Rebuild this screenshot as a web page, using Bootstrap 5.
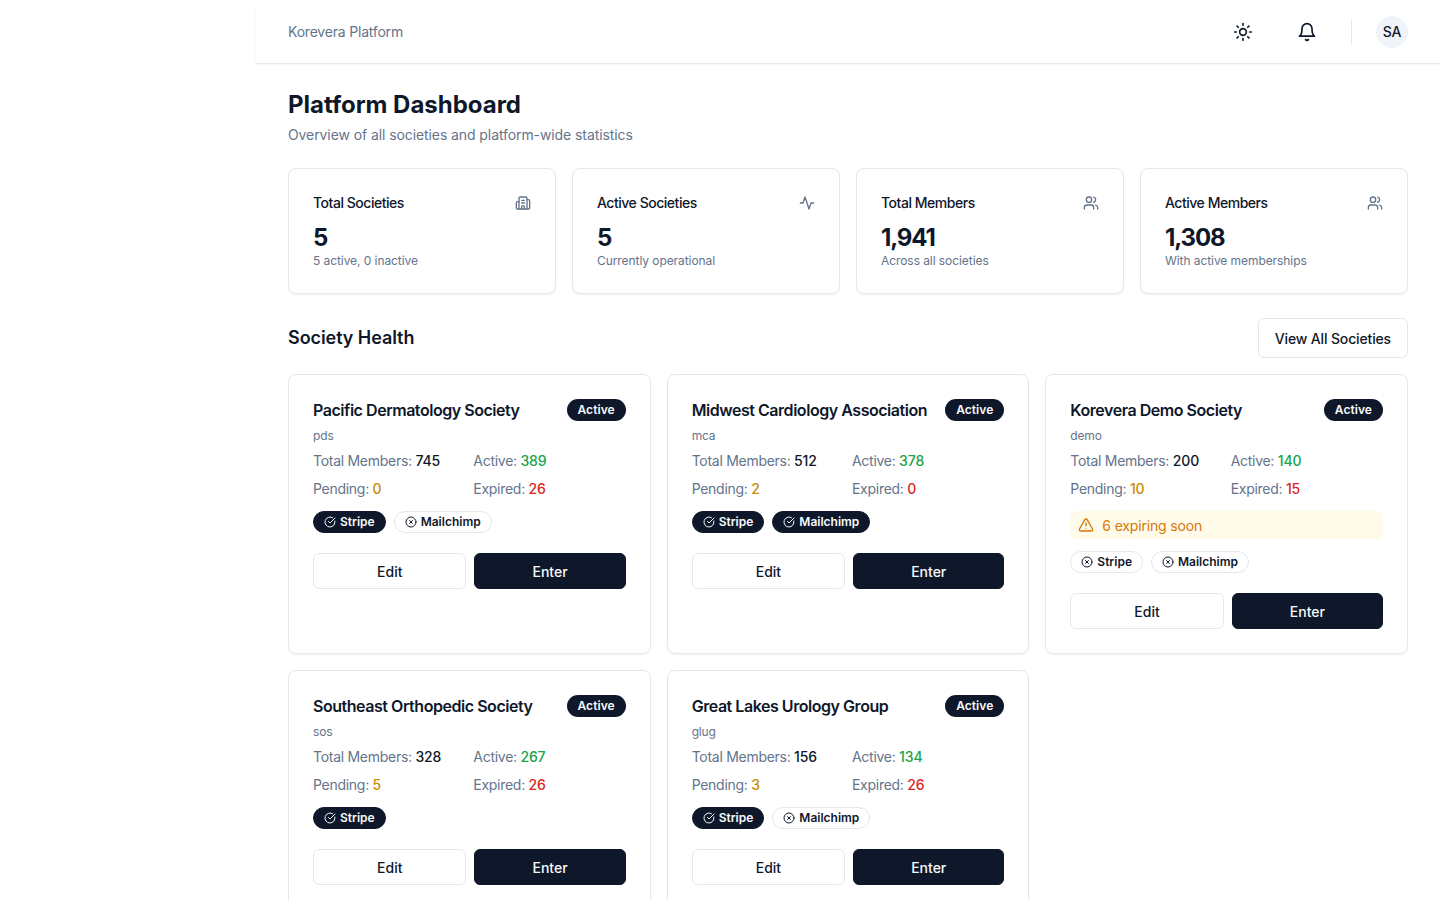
<!DOCTYPE html>
<html lang="en">
  <head>
    <meta charset="UTF-8" />
    <title>Platform Dashboard</title>
    <link href="https://cdn.jsdelivr.net/npm/bootstrap@5.3.2/dist/css/bootstrap.min.css" rel="stylesheet" />
    <style>
      html, body { height: 100%; overflow: hidden; }
      body { font-family: Inter, "Liberation Sans", sans-serif; color: #0f172a; background: #fff; letter-spacing: -0.01em; }
      svg { display: block; flex: none; fill: none; stroke: currentColor; stroke-width: 2; stroke-linecap: round; stroke-linejoin: round; }
      .app-main { margin-left: 256px; }
      .top-bar { height: 64px; padding: 0 32px; border-bottom: 1px solid #e2e8f0; box-shadow: 0 1px 2px rgba(15, 23, 42, .05); }
      .brand-txt { font-size: 14px; color: #64748b; letter-spacing: -0.2px; }
      .top-icon { width: 40px; height: 40px; color: #0f172a; }
      .top-sep { width: 1px; height: 24px; background: #e2e8f0; margin: 0 24px 0 24px; }
      .avatar-sa { width: 32px; height: 32px; border-radius: 50%; background: #f1f5f9; font-size: 14px; font-weight: 500; }
      .page-body { padding: 24px 32px; }
      .page-title { font-size: 24px; line-height: 33px; font-weight: 700; margin: 0 0 3px; letter-spacing: -0.02px; }
      .page-sub { font-size: 14px; line-height: 21px; color: #64748b; margin: 0 0 23px; letter-spacing: -0.09px; }
      .stat-grid { display: grid; grid-template-columns: repeat(4, 1fr); gap: 16px; margin-bottom: 24px; }
      .panel { border: 1px solid #e2e8f0; border-radius: 8px; box-shadow: 0 1px 2px rgba(15, 23, 42, .05); padding: 24px; background: #fff; }
      .stat-head { font-size: 14px; line-height: 20px; font-weight: 500; height: 20px; letter-spacing: -0.47px; }
      .stat-head svg { color: #64748b; }
      .stat-val { font-size: 24px; line-height: 31px; font-weight: 700; margin-top: 9px; letter-spacing: -1.1px; }
      .stat-note { font-size: 12px; line-height: 16px; color: #64748b; letter-spacing: -0.07px; }
      .sec-head { height: 40px; margin-bottom: 16px; }
      .sec-title { font-size: 18px; line-height: 28px; font-weight: 600; margin: 0; letter-spacing: -0.07px; }
      .btn-plain { height: 40px; padding: 0 16px; font-size: 14px; font-weight: 500; color: #0f172a; background: #fff; border: 1px solid #e2e8f0; border-radius: 6px; letter-spacing: -0.15px; }
      .soc-grid { display: grid; grid-template-columns: repeat(3, 1fr); gap: 16px; }
      .soc-title { font-size: 16px; line-height: 22px; font-weight: 600; margin: 0; letter-spacing: -0.46px; }
      .pill-active { font-size: 12px; line-height: 16px; font-weight: 600; padding: 3px 11px; border-radius: 999px; background: #0f172a; color: #f8fafc; letter-spacing: 0.05px; }
      .soc-slug { font-size: 12px; line-height: 16px; color: #64748b; margin-top: 7px; }
      .soc-stats { display: grid; grid-template-columns: 1fr 1fr; column-gap: 8px; row-gap: 8px; font-size: 14px; line-height: 20px; color: #64748b; margin: 7px 0 12px; letter-spacing: -0.28px; }
      .soc-stats b { font-weight: 500; letter-spacing: -0.14px; }
      .val-dark { color: #0f172a; }
      .val-green { color: #16a34a; }
      .val-amber { color: #ca8a04; }
      .val-red { color: #dc2626; }
      .warn-strip { height: 28px; margin-bottom: 12px; padding: 0 8px; gap: 8px; background: #fffbeb; color: #d97706; border-radius: 6px; font-size: 14px; }
      .tag-row { gap: 8px; }
      .tag-pill { height: 22px; padding: 0 10px; gap: 4px; border-radius: 999px; border: 1px solid #e2e8f0; font-size: 12px; font-weight: 600; color: #0f172a; letter-spacing: 0; }
      .tag-pill.is-on { background: #0f172a; border-color: #0f172a; color: #f8fafc; }
      .act-row { gap: 8px; margin-top: 20px; }
      .act-row button { flex: 1 1 0; height: 36px; font-size: 14px; font-weight: 500; border-radius: 6px; border: 1px solid #e2e8f0; background: #fff; color: #0f172a; padding: 0; }
      .act-row button:first-child { flex-grow: 1.015; }
      .act-row button.go-btn { background: #0f172a; border-color: #0f172a; color: #f8fafc; }
    </style>
  </head>

  <body>
    <svg width="0" height="0" class="position-absolute">
      <symbol id="i-check" viewBox="0 0 24 24"><path d="M21.8 10A10 10 0 1 1 17 3.3"/><path d="m9 11 3 3L22 4"/></symbol>
      <symbol id="i-x" viewBox="0 0 24 24"><circle cx="12" cy="12" r="10"/><path d="m15 9-6 6"/><path d="m9 9 6 6"/></symbol>
      <symbol id="i-users" viewBox="0 0 24 24"><path d="M16 21v-2a4 4 0 0 0-4-4H6a4 4 0 0 0-4 4v2"/><circle cx="9" cy="7" r="4"/><path d="M22 21v-2a4 4 0 0 0-3-3.87"/><path d="M16 3.13a4 4 0 0 1 0 7.75"/></symbol>
    </svg>

    <div class="app-main">
      <header class="top-bar d-flex align-items-center justify-content-between">
        <span class="brand-txt">Korevera Platform</span>
        <div class="d-flex align-items-center">
          <div class="top-icon d-flex align-items-center justify-content-center">
            <svg width="20" height="20" viewBox="0 0 24 24"><circle cx="12" cy="12" r="4"/><path d="M12 2v2"/><path d="M12 20v2"/><path d="m4.93 4.93 1.41 1.41"/><path d="m17.66 17.66 1.41 1.41"/><path d="M2 12h2"/><path d="M20 12h2"/><path d="m6.34 17.66-1.41 1.41"/><path d="m19.07 4.93-1.41 1.41"/></svg>
          </div>
          <div class="top-icon d-flex align-items-center justify-content-center ms-4">
            <svg width="20" height="20" viewBox="0 0 24 24"><path d="M6 8a6 6 0 0 1 12 0c0 7 3 9 3 9H3s3-2 3-9"/><path d="M10.3 21a1.94 1.94 0 0 0 3.4 0"/></svg>
          </div>
          <div class="top-sep"></div>
          <div class="avatar-sa d-flex align-items-center justify-content-center">SA</div>
        </div>
      </header>

      <main class="page-body">
        <h1 class="page-title">Platform Dashboard</h1>
        <p class="page-sub">Overview of all societies and platform-wide statistics</p>

        <div class="stat-grid">
          <div class="panel">
            <div class="stat-head d-flex justify-content-between align-items-center">Total Societies
              <svg width="16" height="16" viewBox="0 0 24 24"><path d="M10 12h4"/><path d="M10 8h4"/><path d="M14 21v-3a2 2 0 0 0-4 0v3"/><path d="M6 10H4a2 2 0 0 0-2 2v7a2 2 0 0 0 2 2h16a2 2 0 0 0 2-2V9a2 2 0 0 0-2-2h-2"/><path d="M6 21V5a2 2 0 0 1 2-2h8a2 2 0 0 1 2 2v16"/></svg>
            </div>
            <div class="stat-val">5</div>
            <div class="stat-note">5 active, 0 inactive</div>
          </div>
          <div class="panel">
            <div class="stat-head d-flex justify-content-between align-items-center">Active Societies
              <svg width="16" height="16" viewBox="0 0 24 24"><path d="M22 12h-4l-3 9L9 3l-3 9H2"/></svg>
            </div>
            <div class="stat-val">5</div>
            <div class="stat-note">Currently operational</div>
          </div>
          <div class="panel">
            <div class="stat-head d-flex justify-content-between align-items-center">Total Members
              <svg width="16" height="16"><use href="#i-users"/></svg>
            </div>
            <div class="stat-val">1,941</div>
            <div class="stat-note">Across all societies</div>
          </div>
          <div class="panel">
            <div class="stat-head d-flex justify-content-between align-items-center">Active Members
              <svg width="16" height="16"><use href="#i-users"/></svg>
            </div>
            <div class="stat-val">1,308</div>
            <div class="stat-note">With active memberships</div>
          </div>
        </div>

        <div class="sec-head d-flex justify-content-between align-items-center">
          <h2 class="sec-title">Society Health</h2>
          <button class="btn-plain">View All Societies</button>
        </div>

        <div class="soc-grid">
          <div class="panel">
            <div class="d-flex justify-content-between align-items-start">
              <h3 class="soc-title">Pacific Dermatology Society</h3>
              <span class="pill-active">Active</span>
            </div>
            <div class="soc-slug">pds</div>
            <div class="soc-stats">
              <div>Total Members: <b class="val-dark">745</b></div>
              <div>Active: <b class="val-green">389</b></div>
              <div>Pending: <b class="val-amber">0</b></div>
              <div>Expired: <b class="val-red">26</b></div>
            </div>
            <div class="tag-row d-flex">
              <span class="tag-pill is-on d-flex align-items-center"><svg width="12" height="12"><use href="#i-check"/></svg>Stripe</span>
              <span class="tag-pill d-flex align-items-center"><svg width="12" height="12"><use href="#i-x"/></svg>Mailchimp</span>
            </div>
            <div class="act-row d-flex"><button>Edit</button><button class="go-btn">Enter</button></div>
          </div>

          <div class="panel">
            <div class="d-flex justify-content-between align-items-start">
              <h3 class="soc-title">Midwest Cardiology Association</h3>
              <span class="pill-active">Active</span>
            </div>
            <div class="soc-slug">mca</div>
            <div class="soc-stats">
              <div>Total Members: <b class="val-dark">512</b></div>
              <div>Active: <b class="val-green">378</b></div>
              <div>Pending: <b class="val-amber">2</b></div>
              <div>Expired: <b class="val-red">0</b></div>
            </div>
            <div class="tag-row d-flex">
              <span class="tag-pill is-on d-flex align-items-center"><svg width="12" height="12"><use href="#i-check"/></svg>Stripe</span>
              <span class="tag-pill is-on d-flex align-items-center"><svg width="12" height="12"><use href="#i-check"/></svg>Mailchimp</span>
            </div>
            <div class="act-row d-flex"><button>Edit</button><button class="go-btn">Enter</button></div>
          </div>

          <div class="panel">
            <div class="d-flex justify-content-between align-items-start">
              <h3 class="soc-title">Korevera Demo Society</h3>
              <span class="pill-active">Active</span>
            </div>
            <div class="soc-slug">demo</div>
            <div class="soc-stats">
              <div>Total Members: <b class="val-dark">200</b></div>
              <div>Active: <b class="val-green">140</b></div>
              <div>Pending: <b class="val-amber">10</b></div>
              <div>Expired: <b class="val-red">15</b></div>
            </div>
            <div class="warn-strip d-flex align-items-center">
              <svg width="16" height="16" viewBox="0 0 24 24"><path d="m21.73 18-8-14a2 2 0 0 0-3.48 0l-8 14A2 2 0 0 0 4 21h16a2 2 0 0 0 1.73-3"/><path d="M12 9v4"/><path d="M12 17h.01"/></svg>
              6 expiring soon
            </div>
            <div class="tag-row d-flex">
              <span class="tag-pill d-flex align-items-center"><svg width="12" height="12"><use href="#i-x"/></svg>Stripe</span>
              <span class="tag-pill d-flex align-items-center"><svg width="12" height="12"><use href="#i-x"/></svg>Mailchimp</span>
            </div>
            <div class="act-row d-flex"><button>Edit</button><button class="go-btn">Enter</button></div>
          </div>

          <div class="panel">
            <div class="d-flex justify-content-between align-items-start">
              <h3 class="soc-title">Southeast Orthopedic Society</h3>
              <span class="pill-active">Active</span>
            </div>
            <div class="soc-slug">sos</div>
            <div class="soc-stats">
              <div>Total Members: <b class="val-dark">328</b></div>
              <div>Active: <b class="val-green">267</b></div>
              <div>Pending: <b class="val-amber">5</b></div>
              <div>Expired: <b class="val-red">26</b></div>
            </div>
            <div class="tag-row d-flex">
              <span class="tag-pill is-on d-flex align-items-center"><svg width="12" height="12"><use href="#i-check"/></svg>Stripe</span>
            </div>
            <div class="act-row d-flex"><button>Edit</button><button class="go-btn">Enter</button></div>
          </div>

          <div class="panel">
            <div class="d-flex justify-content-between align-items-start">
              <h3 class="soc-title">Great Lakes Urology Group</h3>
              <span class="pill-active">Active</span>
            </div>
            <div class="soc-slug">glug</div>
            <div class="soc-stats">
              <div>Total Members: <b class="val-dark">156</b></div>
              <div>Active: <b class="val-green">134</b></div>
              <div>Pending: <b class="val-amber">3</b></div>
              <div>Expired: <b class="val-red">26</b></div>
            </div>
            <div class="tag-row d-flex">
              <span class="tag-pill is-on d-flex align-items-center"><svg width="12" height="12"><use href="#i-check"/></svg>Stripe</span>
              <span class="tag-pill d-flex align-items-center"><svg width="12" height="12"><use href="#i-x"/></svg>Mailchimp</span>
            </div>
            <div class="act-row d-flex"><button>Edit</button><button class="go-btn">Enter</button></div>
          </div>
        </div>
      </main>
    </div>
    <script src="https://cdn.jsdelivr.net/npm/bootstrap@5.3.2/dist/js/bootstrap.bundle.min.js"></script>
  </body>
</html>
